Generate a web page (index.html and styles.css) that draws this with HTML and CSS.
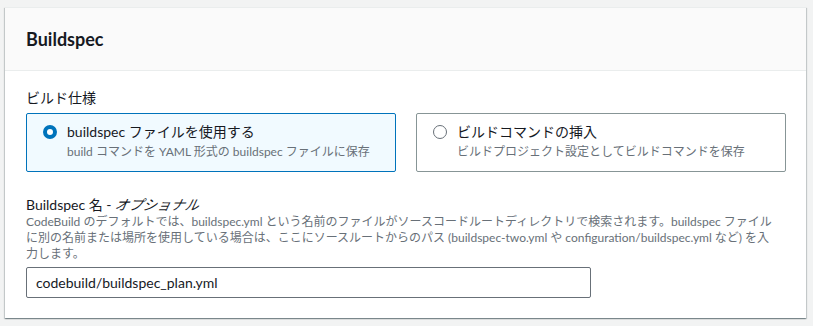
FILE: index.html
```html
<!DOCTYPE html>
<html lang="ja">
<head>
<meta charset="utf-8">
<link rel="stylesheet" href="styles.css">
</head>
<body>
<section class="card">
  <header class="card-header">
    <h2 class="card-title">Buildspec</h2>
  </header>
  <div class="card-body">
    <div class="group-label">ビルド仕様</div>
    <div class="tiles">
      <div class="tile tile-selected">
        <span class="radio radio-on"></span>
        <div class="tile-text">
          <div class="tile-title">buildspec ファイルを使用する</div>
          <div class="tile-sub">build コマンドを YAML 形式の buildspec ファイルに保存</div>
        </div>
      </div>
      <div class="tile">
        <span class="radio"></span>
        <div class="tile-text">
          <div class="tile-title">ビルドコマンドの挿入</div>
          <div class="tile-sub">ビルドプロジェクト設定としてビルドコマンドを保存</div>
        </div>
      </div>
    </div>
    <div class="field">
      <div class="field-label">Buildspec 名 - <i class="optional">オプショナル</i></div>
      <div class="field-desc">CodeBuild のデフォルトでは、buildspec.yml という名前のファイルがソースコードルートディレクトリで検索されます。buildspec ファイル<br>に別の名前または場所を使用している場合は、ここにソースルートからのパス (buildspec-two.yml や configuration/buildspec.yml など) を入<br>力します。</div>
      <div class="input">codebuild/buildspec_plan.yml</div>
    </div>
  </div>
</section>
</body>
</html>
```
FILE: styles.css
```css
html, body {
  margin: 0;
  padding: 0;
  background: #f2f3f3;
}
body {
  padding: 7px 7px 7px 5px;
  font-family: Lato, "Noto Sans CJK JP", sans-serif;
  color: #16191f;
}
.card {
  background: #ffffff;
  border-top: 1px solid #eaeded;
  box-shadow: 0 1px 1px 0 rgba(0, 28, 36, 0.3), 1px 1px 1px 0 rgba(0, 28, 36, 0.15), -1px 1px 1px 0 rgba(0, 28, 36, 0.15);
  width: 801px;
}
.card-header {
  background: #fafafa;
  border-bottom: 1px solid #eaeded;
  padding: 20px 21px;
}
.card-title {
  margin: 0;
  font-size: 18px;
  line-height: 22px;
  font-weight: 700;
}
.card-body {
  padding: 17px 20px 20px 21px;
}
.group-label {
  font-size: 14px;
  line-height: 20px;
}
.tiles {
  display: flex;
  gap: 20px;
  margin-top: 5px;
}
.tile {
  box-sizing: border-box;
  width: 370px;
  height: 59px;
  border: 1px solid #879596;
  border-radius: 2px;
  display: flex;
  align-items: flex-start;
  gap: 10px;
  padding: 8px 15px 9px 16px;
}
.tile-selected {
  border-color: #0073bb;
  background: #f1faff;
}
.radio {
  flex: none;
  box-sizing: border-box;
  width: 14px;
  height: 14px;
  border-radius: 50%;
  border: 1px solid #687078;
  background: #fff;
  margin-top: 3px;
}
.radio-on {
  border: 4px solid #0073bb;
}
.tile-title {
  font-size: 14px;
  line-height: 20px;
}
.tile-sub {
  font-size: 12px;
  line-height: 20px;
  color: #687078;
}
.field {
  margin-top: 24px;
}
.field-label {
  font-size: 14px;
  line-height: 18px;
}
.optional {
  display: inline-block;
  font-style: italic;
  transform: skewX(-12deg);
}
.field-desc {
  font-size: 12px;
  line-height: 16px;
  color: #687078;
  white-space: nowrap;
}
.input {
  box-sizing: border-box;
  margin-top: 5px;
  width: 565px;
  height: 31px;
  border: 1px solid #687078;
  border-radius: 2px;
  padding: 0 9px;
  font-size: 14px;
  line-height: 29px;
  color: #16191f;
}
```
